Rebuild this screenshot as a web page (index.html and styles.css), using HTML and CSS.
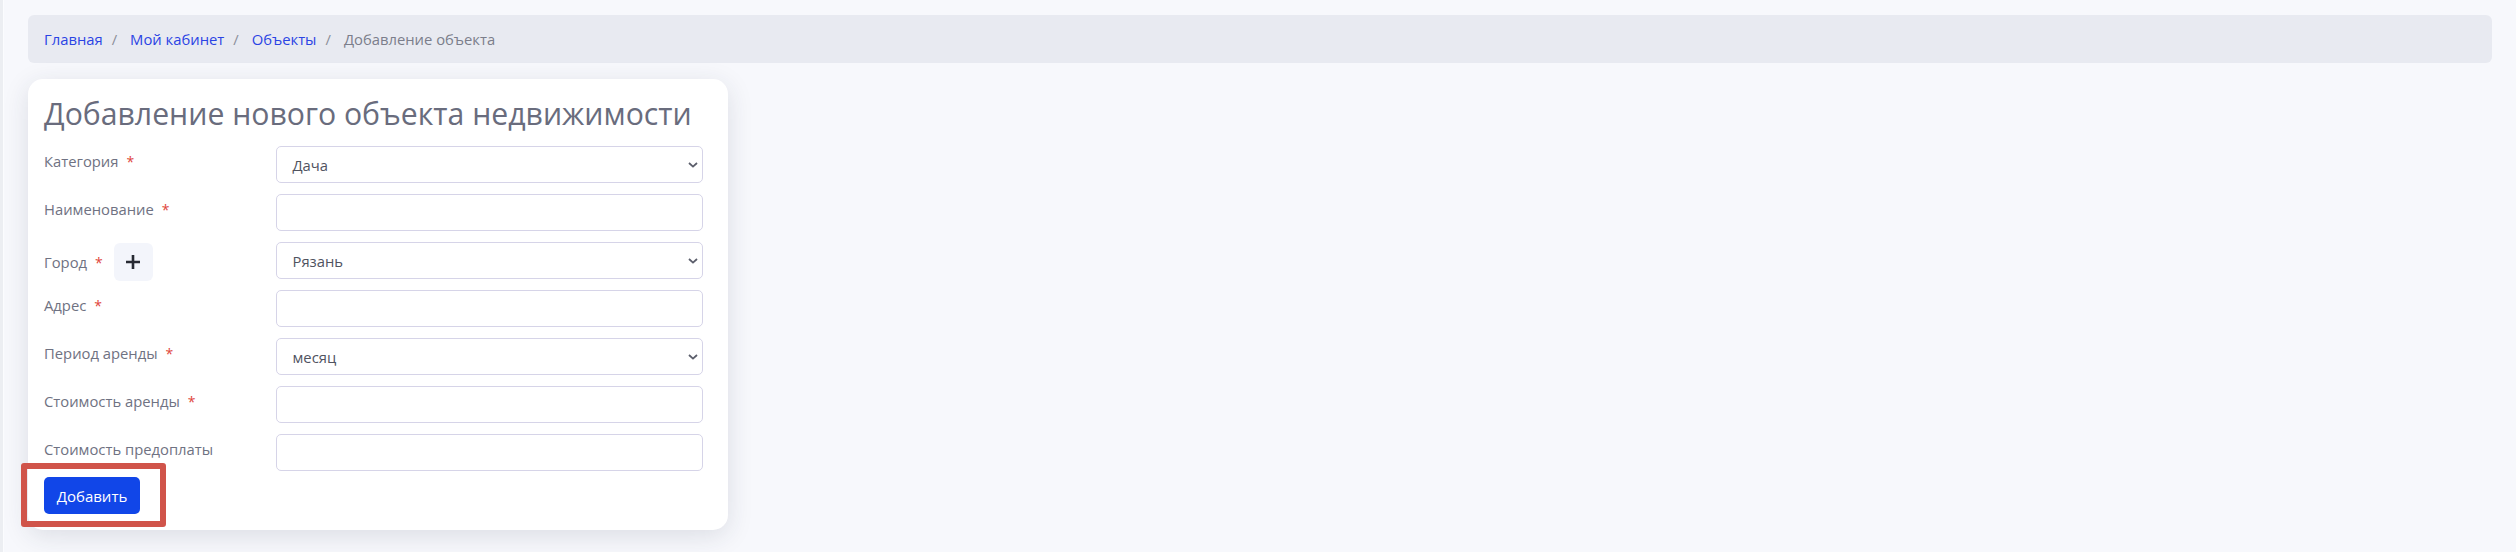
FILE: index.html
```html
<!DOCTYPE html>
<html lang="ru">
<head>
<meta charset="utf-8">
<title>Добавление объекта</title>
<link rel="stylesheet" href="styles.css">
</head>
<body>
<div class="layout">
  <div class="side-edge"></div>
  <main class="content">
    <nav class="breadcrumb">
      <a class="crumb-link" href="#">Главная</a><span class="sep">/</span>
      <a class="crumb-link" href="#">Мой кабинет</a><span class="sep">/</span>
      <a class="crumb-link" href="#">Объекты</a><span class="sep">/</span>
      <span class="crumb-current">Добавление объекта</span>
    </nav>

    <section class="card">
      <h1 class="card-title">Добавление нового объекта недвижимости</h1>
      <form class="form">
        <div class="label-cell"><span class="label">Категория<span class="req">*</span></span></div>
        <div class="control select"><span>Дача</span><svg class="chev" width="10" height="6" viewBox="0 0 10 6"><path d="M1 1l4 3.6L9 1" fill="none" stroke="#5b5e6b" stroke-width="1.8"/></svg></div>

        <div class="label-cell"><span class="label">Наименование<span class="req">*</span></span></div>
        <div class="control"></div>

        <div class="label-cell"><span class="label">Город<span class="req">*</span></span><span class="add-btn"><svg width="14" height="14" viewBox="0 0 14 14"><path d="M7 0v14M0 7h14" stroke="#272a33" stroke-width="2.6"/></svg></span></div>
        <div class="control select"><span>Рязань</span><svg class="chev" width="10" height="6" viewBox="0 0 10 6"><path d="M1 1l4 3.6L9 1" fill="none" stroke="#5b5e6b" stroke-width="1.8"/></svg></div>

        <div class="label-cell"><span class="label">Адрес<span class="req">*</span></span></div>
        <div class="control"></div>

        <div class="label-cell"><span class="label">Период аренды<span class="req">*</span></span></div>
        <div class="control select"><span>месяц</span><svg class="chev" width="10" height="6" viewBox="0 0 10 6"><path d="M1 1l4 3.6L9 1" fill="none" stroke="#5b5e6b" stroke-width="1.8"/></svg></div>

        <div class="label-cell"><span class="label">Стоимость аренды<span class="req">*</span></span></div>
        <div class="control"></div>

        <div class="label-cell"><span class="label">Стоимость предоплаты</span></div>
        <div class="control"></div>
      </form>
      <div class="actions">
        <button class="btn" type="button">Добавить</button>
        <span class="highlight"></span>
      </div>
    </section>
  </main>
</div>
</body>
</html>
```

FILE: styles.css
```css
* { box-sizing: border-box; }

html, body {
  margin: 0;
  padding: 0;
  background: #f7f8fc;
  font-family: "Open Sans", "Noto Sans", sans-serif;
}

.layout {
  display: flex;
  min-height: 552px;
}

.side-edge {
  width: 4px;
  flex: 0 0 4px;
  background: #eceef2;
  border-right: 1px solid #fbfcfe;
}

.content {
  flex: 1;
  padding: 15px 24px 0 24px;
}

.breadcrumb {
  height: 48px;
  background: #e8eaf1;
  border-radius: 6px;
  display: flex;
  align-items: center;
  padding-left: 16px;
  font-size: 14.8px;
}

.crumb-link {
  color: #2b44e4;
  text-decoration: none;
}

.sep {
  color: #8b8e99;
  margin: 0 13px 0 9px;
}

.crumb-current {
  color: #7b7e8b;
}

.card {
  margin-top: 16px;
  width: 700px;
  background: #ffffff;
  border-radius: 15px;
  box-shadow: 0 6px 26px rgba(40, 45, 70, 0.13);
  padding: 16px 25px 16px 16px;
}

.card-title {
  margin: 0;
  font-size: 30.2px;
  line-height: 38px;
  font-weight: 400;
  color: #696c7d;
  white-space: nowrap;
}

.form {
  margin-top: 13px;
  display: grid;
  grid-template-columns: 231.5px 1fr;
  row-gap: 11px;
}

.label-cell {
  display: flex;
  align-items: center;
  align-self: start;
  height: 37px;
  padding-top: 3px;
  font-size: 14.8px;
  line-height: 25px;
  color: #6f7282;
}

.label-cell:not(:has(.add-btn)) {
  align-items: flex-start;
}

.req {
  color: #e0453a;
  margin-left: 8px;
  font-size: 14px;
}

.label-cell .add-btn {
  margin-left: 11px;
  flex: 0 0 auto;
}

.add-btn {
  width: 39px;
  height: 38px;
  border-radius: 6px;
  background: #f3f5fb;
  display: flex;
  align-items: center;
  justify-content: center;
}

.control {
  height: 37px;
  border: 1px solid #d6d4e8;
  border-radius: 5px;
  background: #fff;
}

.select {
  display: flex;
  align-items: center;
  justify-content: space-between;
  padding: 0 4px 0 16px;
  font-size: 14.8px;
  color: #50535f;
}

.chev {
  display: block;
}

.actions {
  position: relative;
  margin-top: 6px;
  display: flex;
}

.btn {
  height: 37px;
  width: 96px;
  border: none;
  border-radius: 5px;
  background: #1146e8;
  color: #ffffff;
  font-family: "Open Sans", "Noto Sans", sans-serif;
  font-size: 15px;
  padding: 0;
}

.highlight {
  position: absolute;
  left: -23px;
  top: -14px;
  width: 145px;
  height: 64px;
  border: 6px solid #d0544a;
  border-radius: 3px;
  pointer-events: none;
}
```
